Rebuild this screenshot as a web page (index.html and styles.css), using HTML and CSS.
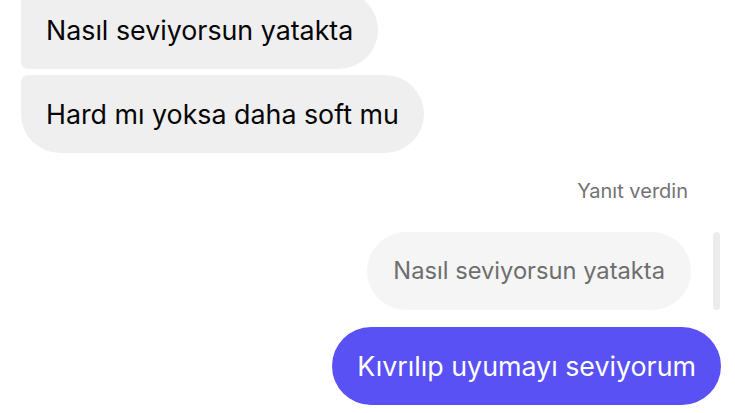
FILE: index.html
```html
<!DOCTYPE html>
<html lang="tr">
<head>
<meta charset="utf-8">
<link rel="stylesheet" href="styles.css">
</head>
<body>
<div class="chat">
  <div class="incoming">
    <div class="bubble in first">Nasıl seviyorsun yatakta</div>
    <div class="bubble in last">Hard mı yoksa daha soft mu</div>
  </div>
  <div class="outgoing">
    <div class="reply-label">Yanıt verdin</div>
    <div class="quote-row">
      <div class="bubble quote">Nasıl seviyorsun yatakta</div>
      <div class="quote-bar"></div>
    </div>
    <div class="bubble mine">Kıvrılıp uyumayı seviyorum</div>
  </div>
</div>
</body>
</html>
```

FILE: styles.css
```css
html, body {
  margin: 0;
  padding: 0;
  background: #ffffff;
}
body {
  width: 735px;
  height: 413px;
  overflow: hidden;
  font-family: "Inter", "Liberation Sans", Arial, sans-serif;
  -webkit-font-smoothing: antialiased;
}
.chat {
  display: flex;
  flex-direction: column;
  margin-top: -9px;
}
.incoming {
  display: flex;
  flex-direction: column;
  align-items: flex-start;
  gap: 6px;
  padding-left: 21px;
}
.bubble {
  font-size: 26.8px;
  line-height: 30px;
  padding: 24px 25px;
  border-radius: 39px;
  white-space: nowrap;
}
.in {
  background: #efefef;
  color: #050505;
}
.in.first {
  border-top-left-radius: 0;
  border-bottom-left-radius: 7px;
}
.in.last {
  border-top-left-radius: 7px;
}
.outgoing {
  display: flex;
  flex-direction: column;
  align-items: flex-end;
  padding-right: 14px;
}
.reply-label {
  margin-top: 26px;
  margin-right: 33px;
  font-size: 20px;
  line-height: 24px;
  color: #737373;
}
.quote-row {
  display: flex;
  align-items: stretch;
  gap: 22px;
  margin-top: 29px;
  margin-right: 1px;
}
.quote {
  font-size: 23.7px;
  padding: 24px 26px;
  background: #f5f5f5;
  color: #6e6e6e;
}
.quote-bar {
  width: 7px;
  border-radius: 4px;
  background: #ececec;
}
.mine {
  margin-top: 17px;
  background: #5951f4;
  color: #ffffff;
}
```
